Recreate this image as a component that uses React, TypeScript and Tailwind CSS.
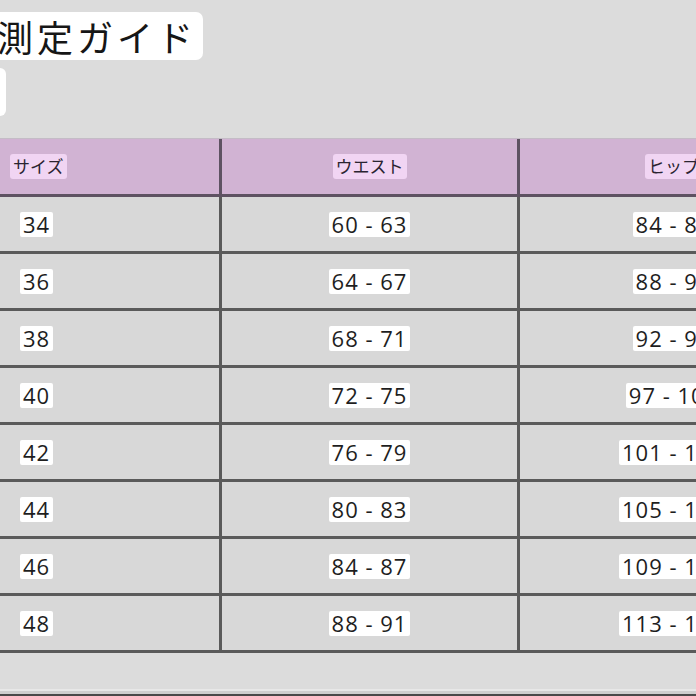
const rows = [
  ["34", "60 - 63", "84 - 87"],
  ["36", "64 - 67", "88 - 91"],
  ["38", "68 - 71", "92 - 95"],
  ["40", "72 - 75", "97 - 100"],
  ["42", "76 - 79", "101 - 104"],
  ["44", "80 - 83", "105 - 108"],
  ["46", "84 - 87", "109 - 112"],
  ["48", "88 - 91", "113 - 116"],
]

function Mark({ children, head }: { children: React.ReactNode; head?: boolean }) {
  return head ? (
    <span className="rounded-[3px] bg-[#f1d5f3] px-[3px] text-[17px] leading-[25px] text-[#2a2430]">{children}</span>
  ) : (
    <span className="rounded-[2px] bg-white px-[3px] text-[22px] font-medium leading-[25px] tracking-[1px] text-[#1e1e1e]">
      {children}
    </span>
  )
}

export default function App() {
  return (
    <div
      className="h-[696px] w-[696px] overflow-hidden bg-[#dcdcdc]"
      style={{ fontFamily: '"Open Sans", "Noto Sans CJK JP", sans-serif' }}
    >
      <div className="pt-[12px]">
        <div className="ml-[-12px] inline-flex h-[48px] items-center rounded-[7px] bg-white pl-[9px] pr-[6px]">
          <span
            className="text-[36px] leading-none tracking-[4px] text-[#161616]"
            style={{ fontFamily: '"Noto Sans CJK JP", sans-serif' }}
          >
            測定ガイド
          </span>
        </div>
      </div>
      <div className="mt-[8px] ml-[-20px] h-[48px] w-[26px] rounded-[6px] bg-white" />

      <div className="mt-[22px] ml-[-10px] w-[1146px] border-t border-[#c4bcc6]">
        <div className="grid grid-cols-[232px_298px_310px] bg-[#d1b3d3]">
          <div className="flex h-[58px] items-center border-r-[3px] border-b-[3px] border-[#5e5262] pl-[20px]">
            <Mark head>サイズ</Mark>
          </div>
          <div className="flex h-[58px] items-center justify-center border-r-[3px] border-b-[3px] border-[#5e5262]">
            <Mark head>ウエスト</Mark>
          </div>
          <div className="flex h-[58px] items-center justify-center border-r-[3px] border-b-[3px] border-[#5e5262]">
            <Mark head>ヒップ</Mark>
          </div>
        </div>
        {rows.map((r) => (
          <div key={r[0]} className="grid grid-cols-[232px_298px_310px] bg-[#d8d8d8]">
            <div className="flex h-[57px] items-center border-r-[3px] border-b-[3px] border-[#5a5a5a] pl-[30px]">
              <Mark>{r[0]}</Mark>
            </div>
            <div className="flex h-[57px] items-center justify-center border-r-[3px] border-b-[3px] border-[#5a5a5a]">
              <Mark>{r[1]}</Mark>
            </div>
            <div className="flex h-[57px] items-center justify-center border-r-[3px] border-b-[3px] border-[#5a5a5a]">
              <Mark>{r[2]}</Mark>
            </div>
          </div>
        ))}
      </div>
      <div className="mt-[36px] h-[8px] border-t-[2px] border-[#e8e8e8] border-b-[3px] border-b-[#4a4a4a] bg-[#cfcfcf]" />
    </div>
  )
}
